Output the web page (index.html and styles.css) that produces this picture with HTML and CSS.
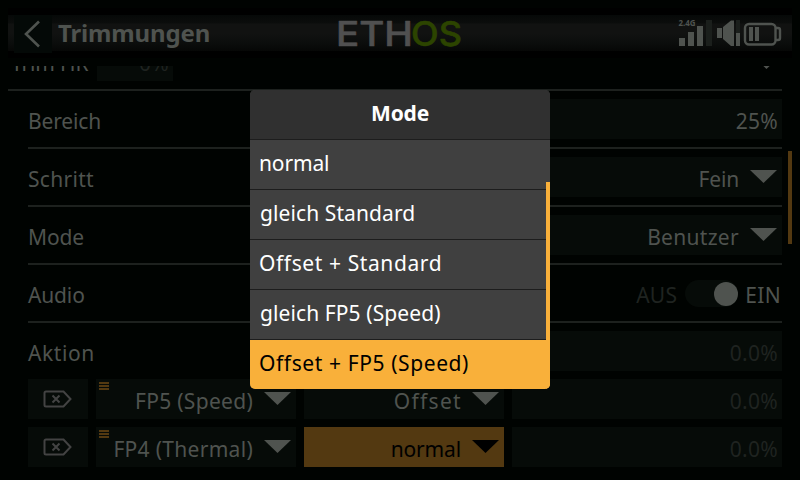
FILE: index.html
```html
<!DOCTYPE html>
<html lang="de">
<head>
<meta charset="utf-8">
<title>Trimmungen</title>
<link rel="stylesheet" href="styles.css">
</head>
<body>
<div class="screen">
  <header class="topbar">
    <div class="back"><svg width="38" height="38" viewBox="0 0 38 38"><path d="M25 6.500L12 19L25 31.500"/></svg></div>
    <h1>Trimmungen</h1>
    <svg class="logo" width="126" height="50" viewBox="0 -7 126 50"><text x="-1" y="31" textLength="77" lengthAdjust="spacingAndGlyphs">ETH</text><text class="os" x="74" y="31" textLength="51" lengthAdjust="spacingAndGlyphs">OS</text></svg>
    <svg class="status" width="106" height="36" viewBox="676 15 106 36">
      <text x="678.500" y="26" textLength="17" lengthAdjust="spacingAndGlyphs">2.4G</text>
      <path class="lit" d="M679 38h6v8h-6zM688 32h6v14h-6zM697 26h6v20h-6z"/>
      <path class="dim" d="M706 20h6v26h-6zM736 20h4v13h-4z"/>
      <path class="lit" d="M717 28h5v10h-5zM723 27L731 20.500H734V46H731L723 39zM736 33h4v13h-4z"/>
      <rect class="line" x="745" y="24" width="30.500" height="20.500" rx="4"/>
      <path class="line" d="M776 28h2q2 0 2 2v8q0 2-2 2h-2"/>
      <path class="lit" d="M749 27h4v14h-4zM755 27h4v14h-4z"/>
    </svg>
  </header>
  <main class="view">
    <div class="row row-head">
      <span class="label tight">Trim HR</span>
      <span class="box small off">0%</span>
      <svg class="arrow" width="27" height="13"><path d="M0 0h27L13.500 13z"/></svg>
    </div>
    <div class="form">
      <div class="row"><span class="label tight">Bereich</span><span class="box wide">25%</span></div>
      <div class="row"><span class="label">Schritt</span><span class="box wide pick tight">Fein<svg class="arrow" width="27" height="13"><path d="M0 0h27L13.500 13z"/></svg></span></div>
      <div class="row"><span class="label tight">Mode</span><span class="box wide pick">Benutzer<svg class="arrow" width="27" height="13"><path d="M0 0h27L13.500 13z"/></svg></span></div>
      <div class="row audio"><span class="label tight">Audio</span><span class="aus off">AUS</span><span class="switch"><i></i></span><span class="on">EIN</span></div>
      <div class="row last"><span class="label loose">Aktion</span><span class="box value off">0.0%</span></div>
      <div class="action">
        <span class="box del"><svg width="30" height="18"><path d="M3 1.500h17.500L27.500 9L20.500 16.500H3q-1.500 0-1.500-1.500V3q0-1.500 1.500-1.500zM9.500 5.500l7 7M16.500 5.500l-7 7"/></svg></span>
        <span class="box pick mid"><i class="grip"></i>FP5 (Speed)<svg class="arrow" width="27" height="13"><path d="M0 0h27L13.500 13z"/></svg></span>
        <span class="box pick mid offset">Offset<svg class="arrow" width="27" height="13"><path d="M0 0h27L13.500 13z"/></svg></span>
        <span class="box value off">0.0%</span>
      </div>
      <div class="action">
        <span class="box del"><svg width="30" height="18"><path d="M3 1.500h17.500L27.500 9L20.500 16.500H3q-1.500 0-1.500-1.500V3q0-1.500 1.500-1.500zM9.500 5.500l7 7M16.500 5.500l-7 7"/></svg></span>
        <span class="box pick mid"><i class="grip"></i>FP4 (Thermal)<svg class="arrow" width="27" height="13"><path d="M0 0h27L13.500 13z"/></svg></span>
        <span class="box pick mid active tight">normal<svg class="arrow" width="27" height="13"><path d="M0 0h27L13.500 13z"/></svg></span>
        <span class="box value off">0.0%</span>
      </div>
    </div>
  </main>
  <i class="page-scroll"></i>
  <div class="dialog">
    <div class="dialog-title">Mode</div>
    <div class="item tight">normal</div>
    <div class="item g">gleich Standard</div>
    <div class="item loose">Offset + Standard</div>
    <div class="item g">gleich FP5 (Speed)</div>
    <div class="item loose selected">Offset + FP5 (Speed)</div>
    <i class="dialog-scroll"></i>
  </div>
</div>
</body>
</html>
```
FILE: styles.css
```css
* { box-sizing: border-box; }
body { margin: 0; background: #000301; }
.screen {
  position: relative;
  width: 800px;
  height: 480px;
  overflow: hidden;
  background: #000301;
  color: #4f534f;
  font: 21px/44px "Noto Sans", sans-serif;
  letter-spacing: 0.3px;
}
.topbar {
  display: flex;
  align-items: center;
  height: 50px;
  margin: 8px 8px 0;
  padding: 0 10px 0 6px;
  background: linear-gradient(#000 0, #000 7px, #060908 7px, #0b0d0c 15px, #111211 16px, #111211 25px, #0c0e0d 34px, #060706 43px, #000 43px);
}
.back { width: 38px; height: 38px; margin-top: 1px; background: #040907; }
.back svg { display: block; fill: none; stroke: #4f534f; stroke-width: 2.600; }
h1 { width: 278px; margin: 0 0 0 6px; font-size: 24px; line-height: 50px; letter-spacing: -0.15px; }
.logo { margin-left: 1px; overflow: visible; }
.logo text { font: 500 34.500px Inter, sans-serif; letter-spacing: 0; fill: #505050; stroke: #505050; stroke-width: 0.600; stroke-linejoin: round; }
.logo .os { fill: #2c4400; stroke: #2c4400; }
.status { margin-left: auto; }
.status text { font: bold 9px "Noto Sans", sans-serif; letter-spacing: 0; fill: #4f534f; }
.lit { fill: #4f534f; }
.dim { fill: #1b1f1c; }
.line { fill: none; stroke: #4f534f; stroke-width: 2.400; }
.view { height: 414px; margin-top: 8px; overflow: hidden; }
.row {
  display: flex;
  align-items: center;
  height: 58px;
  padding: 8px 0;
  border-bottom: 2px solid #1d211e;
}
.label { flex: 1; }
.label, .aus, .on { padding-top: 4px; }
.tight { letter-spacing: -0.15px; }
.loose { letter-spacing: 0.6px; }
.row-head { margin: -33px 18px 0 8px; padding-left: 3px; }
.row-head .label { flex: 0 0 86px; }
.row-head .arrow { margin: 3px 2px 0 auto; }
.form { margin: 0 18px 0 28px; }
.box { height: 40px; background: #060b08; text-align: right; padding-right: 4px; }
.small { width: 76px; }
.wide { width: 478px; }
.value { width: 270px; }
.off { color: #1f2320; }
.pick { display: flex; justify-content: flex-end; align-items: flex-start; padding-right: 5px; }
.arrow { fill: #4f534f; }
.pick .arrow { margin: 13px 0 0 11px; }
.offset { letter-spacing: 1.3px; }
.offset .arrow { margin-left: 10px; }
.last { border: 0; height: 56px; }
.switch { width: 54px; height: 27px; margin: 0 6px 0 8px; padding: 2px 2px 0 2px; border-radius: 14px; background: #060b08; display: flex; justify-content: flex-end; }
.audio .switch { margin-right: 7px; padding-right: 0; width: 53px; }
.switch i { width: 24px; height: 24px; border-radius: 50%; background: #4f534f; }
.audio .on { margin-right: 1px; }
.action { display: flex; gap: 8px; margin-bottom: 8px; }
.del { width: 60px; padding: 11px 0 0 15px; text-align: left; }
.del svg { display: block; fill: none; stroke: #434343; stroke-width: 2; }
.mid { width: 200px; position: relative; }
.grip {
  position: absolute;
  left: 3px;
  top: 3px;
  width: 10px;
  height: 8px;
  background: repeating-linear-gradient(#533911 0, #533911 2px, transparent 2px, transparent 3px);
}
.active { background: #533911; color: #000; }
.active .arrow { fill: #000; }
.page-scroll { position: absolute; left: 788px; top: 151px; width: 4px; height: 93px; background: #533911; }
.dialog {
  position: absolute;
  left: 250px;
  top: 90px;
  width: 300px;
  height: 299px;
  border-radius: 5px;
  overflow: hidden;
  background: #404040;
  color: #fff;
}
.dialog-title, .item { height: 50px; line-height: 46px; border-bottom: 1px solid #1d1d1d; }
.dialog-title { background: #303030; text-align: center; font-weight: 700; letter-spacing: -0.2px; }
.item { padding-left: 9px; }
.g { padding-left: 10px; letter-spacing: 0.100px; }
.selected { background: #f9b03a; color: #000; border: 0; }
.dialog-scroll { position: absolute; right: 0; top: 92px; width: 4px; height: 207px; background: #f9b03a; }
```
